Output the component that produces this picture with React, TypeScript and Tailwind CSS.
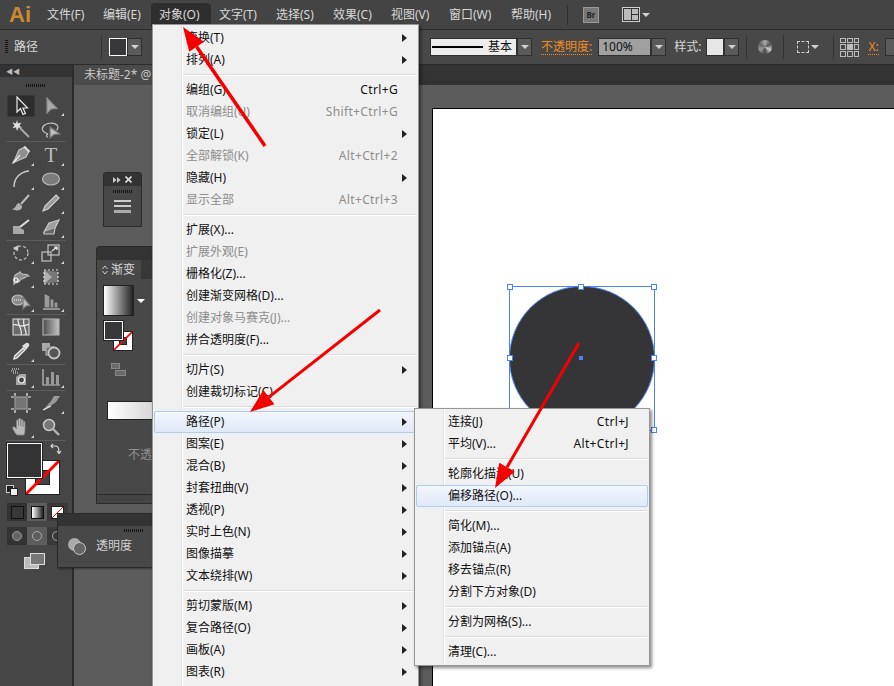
import React from "react";

const FONT = "font-['Noto_Sans','Noto_Sans_CJK_SC',sans-serif]";

type Item = { l: string; s?: string; d?: boolean; sub?: boolean; hi?: boolean } | "sep";

const mainMenu: Item[] = [
  { l: "变换(T)", sub: true },
  { l: "排列(A)", sub: true },
  "sep",
  { l: "编组(G)", s: "Ctrl+G" },
  { l: "取消编组(U)", s: "Shift+Ctrl+G", d: true },
  { l: "锁定(L)", sub: true },
  { l: "全部解锁(K)", s: "Alt+Ctrl+2", d: true },
  { l: "隐藏(H)", sub: true },
  { l: "显示全部", s: "Alt+Ctrl+3", d: true },
  "sep",
  { l: "扩展(X)..." },
  { l: "扩展外观(E)", d: true },
  { l: "栅格化(Z)..." },
  { l: "创建渐变网格(D)..." },
  { l: "创建对象马赛克(J)...", d: true },
  { l: "拼合透明度(F)..." },
  "sep",
  { l: "切片(S)", sub: true },
  { l: "创建裁切标记(C)" },
  "sep",
  { l: "路径(P)", sub: true, hi: true },
  { l: "图案(E)", sub: true },
  { l: "混合(B)", sub: true },
  { l: "封套扭曲(V)", sub: true },
  { l: "透视(P)", sub: true },
  { l: "实时上色(N)", sub: true },
  { l: "图像描摹", sub: true },
  { l: "文本绕排(W)", sub: true },
  "sep",
  { l: "剪切蒙版(M)", sub: true },
  { l: "复合路径(O)", sub: true },
  { l: "画板(A)", sub: true },
  { l: "图表(R)", sub: true },
];

const pathMenu: Item[] = [
  { l: "连接(J)", s: "Ctrl+J" },
  { l: "平均(V)...", s: "Alt+Ctrl+J" },
  "sep",
  { l: "轮廓化描边(U)" },
  { l: "偏移路径(O)...", hi: true },
  "sep",
  { l: "简化(M)..." },
  { l: "添加锚点(A)" },
  { l: "移去锚点(R)" },
  { l: "分割下方对象(D)" },
  "sep",
  { l: "分割为网格(S)..." },
  "sep",
  { l: "清理(C)..." },
];

const topMenu = [
  { l: "文件(F)", w: "w-[56px]" },
  { l: "编辑(E)", w: "w-[56px]" },
  { l: "对象(O)", w: "w-[60px] bg-[#2e2e2e] rounded-t-sm" },
  { l: "文字(T)", w: "w-[57px]" },
  { l: "选择(S)", w: "w-[57px]" },
  { l: "效果(C)", w: "w-[58px]" },
  { l: "视图(V)", w: "w-[58px]" },
  { l: "窗口(W)", w: "w-[62px]" },
  { l: "帮助(H)", w: "w-[64px]" },
];

function Caret({ c = "border-t-[#d0d0d0]" }: { c?: string }) {
  return <span className={`block w-0 h-0 border-x-[4px] border-x-transparent border-t-[4px] ${c}`} />;
}

function DropBtn({ w = "w-[15px]" }: { w?: string }) {
  return (
    <span className={`${w} h-[18px] flex items-center justify-center bg-[#5a5a5a] border border-[#2f2f2f]`}>
      <Caret />
    </span>
  );
}

function Grip({ w = "w-[20px]" }: { w?: string }) {
  return <div className={`${w} h-[3px] bg-[repeating-linear-gradient(90deg,#151515_0,#151515_1px,transparent_1px,transparent_2px)]`} />;
}

function Menu({ items, box, sepMl }: { items: Item[]; box: string; sepMl: string }) {
  return (
    <div className={`absolute bg-[#f0f0f0] border border-[#979797] pt-[2px] shadow-[2px_2px_3px_rgba(0,0,0,0.45)] text-[12px] ${box}`}>
      <div className="absolute top-px bottom-px left-[28px] w-px bg-[#e2e3e3]" />
      <div className="absolute top-px bottom-px left-[29px] w-px bg-white" />
      {items.map((it, i) =>
        it === "sep" ? (
          <div key={i} className={`h-[8px] flex flex-col justify-center ${sepMl} mr-[2px]`}>
            <div className="h-px bg-[#dcdcdc]" />
            <div className="h-px bg-white" />
          </div>
        ) : (
          <div
            key={i}
            className={`h-[22px] mx-px flex items-center pl-[31px] relative whitespace-nowrap border rounded-[2px] ${it.d ? "text-[#8d8d8d]" : "text-[#111]"} ${
              it.hi ? "border-[#aeccf0] bg-[linear-gradient(#f3f7fd,#dfe9f8)]" : "border-transparent"
            }`}
          >
            <span>{it.l}</span>
            {it.s && <span className="ml-auto mr-[18px] tracking-[0.35px]">{it.s}</span>}
            {it.sub && <span className="ml-auto mr-[9px] w-0 h-0 border-y-[4px] border-y-transparent border-l-[5px] border-l-[#222]" />}
          </div>
        )
      )}
    </div>
  );
}

const S = "#c4c4c4";

function Ic({ children }: { children: React.ReactNode }) {
  return (
    <svg viewBox="0 0 20 20" className="w-[20px] h-[20px]" fill="none" stroke={S} strokeWidth="1.2">
      {children}
    </svg>
  );
}

const icons: Record<string, React.ReactNode> = {
  sel: <Ic><path d="M6 1V16L9.5 12.5L12 18.5L14.5 17.5L12 12H16.5Z" fill="#2c2c2c" stroke="#e8e8e8" /></Ic>,
  direct: <Ic><path d="M6 2V17L10 13L16 12.5Z" fill="#a8a8a8" stroke="#8c8c8c" /></Ic>,
  wand: <Ic><path d="M6 1L7 4.5L10.5 3.5L8.5 6.5L11 9L7.5 8.5L6 12L5 8.5L1.5 9L3.5 6.5L1.5 3.5L5 4.5Z" fill="#e0e0e0" stroke="none" /><path d="M9 9L18 18" strokeWidth="2" stroke="#aaa" /></Ic>,
  lasso: <Ic><path d="M7 15C2 14 0 10 2.5 7C5 4 13 3 16 6C17.5 8 17 10 15.5 11" /><path d="M9 8V19L13 15.5L19 15Z" fill="#bdbdbd" stroke="#777" /><path d="M7 15C5 16 5 18 7 18" /></Ic>,
  pen: <Ic><path d="M14 2L18 6L15 12L6 16L2 18L4 14L8 5Z" fill="#8f8f8f" /><path d="M2 18L9 10" stroke="#eee" /><path d="M13 1.5L18.5 7" strokeWidth="2" stroke="#ddd" /></Ic>,
  arc: <Ic><path d="M3 18C3 9 9 3 18 2" strokeWidth="1.4" stroke="#ccc" /></Ic>,
  ell: <Ic><ellipse cx="10" cy="10" rx="8.5" ry="6" fill="#7c7c7c" stroke="#b8b8b8" /></Ic>,
  brush: <Ic><path d="M18 2L10 11" strokeWidth="2" stroke="#bbb" /><path d="M8 10C4 11 6 15 1 16C6 19 12 17 11 13Z" fill="#b0b0b0" stroke="none" /></Ic>,
  pencil: <Ic><path d="M15 2L18 5L7 16L2 18L4 13Z" fill="#9a9a9a" stroke="#cfcfcf" /></Ic>,
  blob: <Ic><path d="M2 9H11L9 11L13 13V17H2Z" fill="#a8a8a8" stroke="none" /><path d="M9 10L18 3" strokeWidth="2" stroke="#ddd" /></Ic>,
  eraser: <Ic><path d="M8 6L18 3L14 11L3 15Z" fill="#a0a0a0" stroke="#c8c8c8" /><path d="M3 15V17H13L14 11" fill="#666" /></Ic>,
  rotate: <Ic><circle cx="10" cy="10" r="7" strokeDasharray="3 2" /><path d="M3 5L7 3L6.5 7.5Z" fill="#ddd" /></Ic>,
  scale: <Ic><rect x="1" y="9" width="9" height="9" /><rect x="7" y="2" width="11" height="10" /><path d="M11 8L16 4M13 4H16V7" stroke="#eee" /></Ic>,
  warp: <Ic><path d="M3 12C3 6 8 7 9 5C11 10 15 5 18 9C15 9 13 12 10 12C8 17 6 14 3 17Z" fill="#8a8a8a" stroke="#bbb" /><circle cx="5" cy="13" r="2" stroke="#fff" /></Ic>,
  free: <Ic><path d="M3 3L17 5V15L3 17Z" fill="#777" stroke="none" /><path d="M3 3L11 10L3 17Z" fill="#b0b0b0" stroke="none" /><rect x="3" y="3" width="14" height="14" strokeDasharray="2 2" stroke="#ddd" /></Ic>,
  shape: <Ic><ellipse cx="7" cy="9" rx="6" ry="5" fill="#8a8a8a" /><path d="M3 9H11" strokeDasharray="1 1" stroke="#fff" /><path d="M12 6V18L15 15L19 14.5Z" fill="#bdbdbd" stroke="#777" /></Ic>,
  graph: <Ic><path d="M3 2L9 5V17H3Z M9 8H13V17H9Z M13 11H17V17H13Z" fill="#9a9a9a" stroke="#444" /><path d="M2 18H19" /></Ic>,
  mesh: <Ic><rect x="2" y="2" width="16" height="16" fill="#6a6a6a" stroke="#ccc" /><path d="M2 8C7 6 9 12 18 7M7 2C6 8 12 12 10 18M13 2C11 9 16 13 15 18" stroke="#eee" /></Ic>,
  grad: <Ic><defs><linearGradient id="tg"><stop offset="0" stopColor="#4c4c4c" /><stop offset="1" stopColor="#c4c4c4" /></linearGradient></defs><rect x="2" y="2" width="16" height="16" fill="url(#tg)" stroke="#aaa" /></Ic>,
  drop: <Ic><path d="M12 7L14 9L6 17L3 18L3.5 15Z" fill="#999" stroke="#eee" /><path d="M11 5L15 9L18 5C19 3 17 1 15 2Z" fill="#ddd" stroke="none" /></Ic>,
  blend: <Ic><rect x="1" y="2" width="8" height="8" fill="#aaa" stroke="none" /><rect x="5" y="6" width="8" height="8" fill="#777" stroke="#aaa" /><circle cx="13" cy="12" r="5.5" fill="#555" strokeWidth="1.8" /></Ic>,
  spray: <Ic><path d="M9 7H15V18H5V10Z" fill="#a6a6a6" stroke="none" /><circle cx="10.5" cy="13" r="3" fill="#444" stroke="#eee" /><path d="M1 2H8M0 4H6M2 6H8" strokeDasharray="1 1" stroke="#eee" /></Ic>,
  bars: <Ic><path d="M2 2V18H19" /><rect x="5" y="10" width="3" height="8" fill="#999" stroke="none" /><rect x="10" y="5" width="3" height="13" fill="#999" stroke="none" /><rect x="15" y="8" width="3" height="10" fill="#999" stroke="none" /></Ic>,
  board: <Ic><rect x="4" y="4" width="12" height="12" fill="#757575" stroke="#999" /><path d="M4 0V3M16 0V3M4 17V20M16 17V20M0 4H3M0 16H3M17 4H20M17 16H20" stroke="#eee" /></Ic>,
  slice: <Ic><path d="M2 17L10 8L13 3H19L15 9L8 14Z" fill="#999" stroke="none" /><path d="M2 17L10 13" stroke="#eee" /></Ic>,
  hand: <Ic><path d="M5 17C3 14 1 11 2 10C3 9 5 11 5.5 12V4C5.5 2.5 7.5 2.5 7.5 4V9V2.5C7.5 1 9.8 1 9.8 2.5V9V3.5C9.8 2 12 2 12 3.5V10V5.5C12 4 14 4 14 5.5V12C14 15 13.5 16 13 18H6Z" fill="#b8b8b8" stroke="#888" strokeWidth="0.8" /></Ic>,
  zoom: <Ic><circle cx="8" cy="8" r="5.5" fill="#777" stroke="#c8c8c8" strokeWidth="1.5" /><path d="M12 12L18 18" strokeWidth="2.4" stroke="#b4b4b4" /></Ic>,
};

type Tool = { i: string; c?: boolean; t?: boolean };

function ToolCell({ i, c, t, active }: Tool & { active?: boolean }) {
  return (
    <div className="relative w-[30px] flex items-center justify-center">
      {active && <div className="absolute w-[28px] h-[22px] bg-[#2d2d2d] border border-[#3a3a3a]" />}
      <div className="relative">
        {t ? (
          <span className="block w-[20px] text-center text-[21px] leading-[20px] text-[#bcbcbc] font-['Liberation_Serif',serif]">T</span>
        ) : (
          icons[i]
        )}
      </div>
      {c && <span className="absolute right-[2px] bottom-[1px] w-0 h-0 border-l-[3px] border-l-transparent border-b-[3px] border-b-[#d5d5d5]" />}
    </div>
  );
}

function ToolRow({ a, b, h = "h-[24px]", active }: { a: Tool; b: Tool; h?: string; active?: boolean }) {
  return (
    <div className={`flex pl-[6px] ${h}`}>
      <ToolCell {...a} active={active} />
      <ToolCell {...b} />
    </div>
  );
}

function ToolSep({ h = "h-[2px]" }: { h?: string }) {
  return (
    <div className={`${h} flex items-center px-[6px]`}>
      <div className="w-full h-px bg-[#5c5c5c]" />
    </div>
  );
}

function NoneSwatch({ box, inner }: { box: string; inner: string }) {
  return (
    <div className={`relative bg-white border border-[#222] overflow-hidden ${box}`}>
      <div className={`absolute bg-[#444] border border-[#222] ${inner}`} />
      <svg viewBox="0 0 10 10" preserveAspectRatio="none" className="absolute inset-0 w-full h-full">
        <path d="M0 10L10 0" stroke="#f00" strokeWidth="0.9" />
      </svg>
    </div>
  );
}

function Arrow({ x1, y1, x2, y2, len, hw, sw }: { x1: number; y1: number; x2: number; y2: number; len: number; hw: number; sw: number }) {
  const d = Math.hypot(x2 - x1, y2 - y1);
  const ux = (x2 - x1) / d;
  const uy = (y2 - y1) / d;
  const bx = x2 - ux * len;
  const by = y2 - uy * len;
  const pts = `${x2},${y2} ${bx - uy * hw},${by + ux * hw} ${bx + uy * hw},${by - ux * hw}`;
  return (
    <g>
      <line x1={x1} y1={y1} x2={bx} y2={by} stroke="#f40000" strokeWidth={sw} />
      <polygon points={pts} fill="#f40000" />
    </g>
  );
}

function Handle({ cls }: { cls: string }) {
  return <span className={`absolute w-[6px] h-[6px] bg-white border border-[#4d84f5] ${cls}`} />;
}

export default function App() {
  return (
    <div className={`relative w-[894px] h-[686px] overflow-hidden flex flex-col bg-[#5c5c5c] text-[12px] ${FONT}`}>
      {/* menu bar */}
      <div className="h-[30px] shrink-0 flex items-center bg-[#444444] border-b border-[#2c2c2c] text-[#d8d8d8]">
        <span className="w-[39px] pl-[9px] text-[22px] leading-[24px] font-bold text-[#c98c30] font-['Liberation_Sans',sans-serif]">Ai</span>
        {topMenu.map((m) => (
          <span key={m.l} className={`h-[24px] leading-[24px] pl-2 whitespace-nowrap ${m.w}`}>{m.l}</span>
        ))}
        <span className="w-px h-[20px] bg-[#2f2f2f]" />
        <span className="ml-[15px] w-[16px] h-[16px] flex items-center justify-center bg-[#777] border border-[#999] text-[8px] font-bold text-[#222]">Br</span>
        <span className="ml-[23px] w-[18px] h-[15px] border border-[#cfcfcf] bg-[#333] grid grid-cols-2 grid-rows-2 gap-px p-px">
          <span className="row-span-2 bg-[#bbb]" />
          <span className="bg-[#bbb]" />
          <span className="bg-[#bbb]" />
        </span>
        <span className="ml-[2px]"><Caret /></span>
      </div>

      {/* options bar */}
      <div className="h-[35px] shrink-0 flex items-center overflow-hidden whitespace-nowrap bg-[#484848] border-b border-[#2b2b2b] text-[#d8d8d8] [&>*]:shrink-0">
        <span className="ml-[5px] w-[3px] h-[14px] bg-[repeating-linear-gradient(#151515_0,#151515_1px,transparent_1px,transparent_2px)]" />
        <span className="ml-[6px] text-[12px]">路径</span>
        <span className="ml-[63px] w-px h-[24px] bg-[#333]" />
        <span className="ml-[7px] w-[18px] h-[18px] bg-[#38383b] border border-white" />
        <DropBtn />
        <span className="ml-[288px] w-[87px] h-[18px] flex items-center bg-[#ececec] border border-[#2f2f2f] text-[#111]">
          <span className="ml-px w-[51px] h-[2px] bg-black" />
          <span className="ml-[5px]">基本</span>
        </span>
        <DropBtn />
        <span className="ml-[9px] text-[#f08a24] border-b border-dotted border-[#f08a24] leading-[15px]">不透明度:</span>
        <span className="ml-[6px] w-[53px] h-[18px] flex items-center pl-[3px] bg-[#a0a0a0] border border-[#2f2f2f] text-[#111]">100%</span>
        <DropBtn />
        <span className="ml-[8px]">样式:</span>
        <span className="ml-[5px] w-[18px] h-[18px] bg-[#e6e6e6] border border-[#2f2f2f]" />
        <DropBtn />
        <span className="ml-[7px] w-px h-[24px] bg-[#333]" />
        <span className="ml-[11px] w-[14px] h-[14px] rounded-full bg-[conic-gradient(#aaa,#555,#ccc,#444,#999,#666,#aaa)]" />
        <span className="ml-[11px] w-px h-[24px] bg-[#333]" />
        <span className="ml-[13px] w-[12px] h-[12px] border border-dashed border-[#ccc]" />
        <span className="ml-[2px]"><Caret /></span>
        <span className="ml-[14px] w-px h-[24px] bg-[#333]" />
        <span className="ml-[6px] w-[19px] h-[19px] grid grid-cols-3 gap-[1px]">
          {[0, 1, 2, 3, 4, 5, 6, 7, 8].map((n) => (
            <span key={n} className={`border border-[#bbb] ${n === 4 ? "bg-[#bbb]" : ""}`} />
          ))}
        </span>
        <span className="ml-[9px] text-[#f08a24] border-b border-dotted border-[#f08a24] leading-[15px]">X:</span>
        <span className="ml-[6px] w-[10px] h-[18px] bg-[#5a5a5a] border border-[#2f2f2f]" />
      </div>

      {/* work area */}
      <div className="flex-1 flex min-h-0">
        <div className="w-[72px] shrink-0 bg-[#464646] flex flex-col">
          <div className="h-[12px] bg-[#333] flex items-center pl-[6px] text-[7px] leading-none text-[#bbb]">◀◀</div>
          <div className="h-[17px] flex items-center justify-center"><Grip /></div>
          <ToolRow h="h-[23px]" active a={{ i: "sel" }} b={{ i: "direct", c: true }} />
          <ToolRow h="h-[23px]" a={{ i: "wand" }} b={{ i: "lasso" }} />
          <ToolSep h="h-[3px]" />
          <ToolRow a={{ i: "pen", c: true }} b={{ i: "t", t: true, c: true }} />
          <ToolRow a={{ i: "arc", c: true }} b={{ i: "ell", c: true }} />
          <ToolRow a={{ i: "brush" }} b={{ i: "pencil", c: true }} />
          <ToolRow a={{ i: "blob" }} b={{ i: "eraser", c: true }} />
          <ToolSep />
          <ToolRow a={{ i: "rotate", c: true }} b={{ i: "scale", c: true }} />
          <ToolRow a={{ i: "warp", c: true }} b={{ i: "free" }} />
          <ToolRow a={{ i: "shape", c: true }} b={{ i: "graph", c: true }} />
          <ToolSep />
          <ToolRow a={{ i: "mesh" }} b={{ i: "grad" }} />
          <ToolRow a={{ i: "drop", c: true }} b={{ i: "blend" }} />
          <ToolSep />
          <ToolRow a={{ i: "spray", c: true }} b={{ i: "bars", c: true }} />
          <ToolSep />
          <ToolRow a={{ i: "board" }} b={{ i: "slice", c: true }} />
          <ToolRow a={{ i: "hand", c: true }} b={{ i: "zoom" }} />
          <ToolSep />
          {/* fill and stroke */}
          <div className="relative h-[60px] shrink-0">
            <NoneSwatch box="absolute left-[25px] top-[19px] w-[35px] h-[35px]" inner="left-[9px] top-[9px] w-[15px] h-[15px]" />
            <div className="absolute left-[7px] top-[2px] w-[35px] h-[35px] bg-[#333336] border border-white outline outline-[#222]" />
            <svg viewBox="0 0 12 12" className="absolute left-[50px] top-[2px] w-[12px] h-[12px]" fill="none" stroke="#ddd" strokeWidth="1.2">
              <path d="M1 3H6C8.5 3 9 5 9 10" />
              <path d="M3 1L1 3L3 5M7 8L9 10.5L11 8" />
            </svg>
            <span className="absolute left-[6px] top-[44px] w-[8px] h-[8px] bg-[#222] border border-[#ccc]" />
            <span className="absolute left-[10px] top-[47px] w-[8px] h-[8px] bg-[#eee] border border-[#222]" />
          </div>
          <div className="mt-[2px] ml-[7px] w-[61px] h-[18px] flex bg-[#3a3a3a]">
            <span className="w-[20px] flex items-center justify-center bg-[#333]"><span className="w-[13px] h-[13px] bg-[#38383b] border border-[#111]" /></span>
            <span className="w-[20px] flex items-center justify-center bg-[#5d5d5d]"><span className="w-[13px] h-[13px] border border-[#111] bg-[linear-gradient(90deg,#fff,#222)]" /></span>
            <span className="w-[20px] flex items-center justify-center"><NoneSwatch box="w-[13px] h-[13px]" inner="hidden" /></span>
          </div>
          <div className="mt-[6px] ml-[7px] w-[61px] h-[18px] flex bg-[#3a3a3a]">
            <span className="w-[20px] flex items-center justify-center bg-[#333]"><span className="w-[10px] h-[10px] rounded-full border border-[#999] bg-[#666]" /></span>
            <span className="w-[20px] flex items-center justify-center bg-[#5d5d5d]"><span className="w-[10px] h-[10px] rounded-full border border-[#aaa]" /></span>
            <span className="w-[20px] flex items-center justify-center"><span className="w-[10px] h-[10px] rounded-full border border-[#aaa]" /></span>
          </div>
          <div className="mt-[8px] ml-[24px] relative w-[21px] h-[16px]">
            <span className="absolute left-0 top-[4px] w-[15px] h-[12px] bg-[#bbb] border border-[#ddd]" />
            <span className="absolute left-[6px] top-0 w-[15px] h-[12px] bg-[#777] border border-[#ddd]" />
          </div>
        </div>
        <div className="w-[2px] shrink-0 bg-[#2b2b2b]" />

        <div className="flex-1 flex flex-col min-w-0">
          <div className="h-[20px] shrink-0 bg-[#333333] flex items-stretch">
            <span className="w-[120px] bg-[#4a4a4a] pl-[10px] leading-[20px] whitespace-nowrap text-[#c8c8c8]">未标题-2* @ 100%</span>
          </div>
          <div className="flex-1 bg-[#5c5c5c] pt-[23px] pl-[358px]">
            <div className="relative w-full h-full bg-white border-l border-t border-black">
              <div className="absolute left-[76px] top-[177px] w-[146px] h-[145px] border border-[#4d84f5]">
                <div className="absolute -left-px -top-px w-[146px] h-[145px] rounded-full bg-[#353538] border border-[#4d84f5]" />
                <Handle cls="-left-[3px] -top-[3px]" />
                <Handle cls="left-[68px] -top-[3px]" />
                <Handle cls="-right-[3px] -top-[3px]" />
                <Handle cls="-left-[3px] top-[68px]" />
                <Handle cls="-right-[3px] top-[68px]" />
                <Handle cls="-left-[3px] -bottom-[3px]" />
                <Handle cls="-right-[3px] -bottom-[3px]" />
                <span className="absolute left-[69px] top-[69px] w-[4px] h-[4px] bg-[#4d84f5]" />
              </div>
            </div>
          </div>
        </div>
      </div>

      {/* floating collapsed panel */}
      <div className="absolute left-[103px] top-[172px] w-[39px] h-[55px] bg-[#484848] border border-[#2a2a2a] rounded-t-[3px] flex flex-col items-center">
        <div className="w-full h-[13px] bg-[#333] flex items-center justify-between px-[9px]">
          <svg viewBox="0 0 8 6" className="w-[8px] h-[6px]" fill="#ccc"><path d="M0 0L3.5 3L0 6ZM4 0L7.5 3L4 6Z" /></svg>
          <svg viewBox="0 0 7 7" className="w-[7px] h-[7px]" stroke="#ddd" strokeWidth="1.6"><path d="M0.5 0.5L6.5 6.5M6.5 0.5L0.5 6.5" /></svg>
        </div>
        <div className="mt-[4px]"><Grip /></div>
        <div className="mt-[7px] w-[17px] flex flex-col gap-[3px]">
          <span className="h-[2px] bg-[#ccc]" />
          <span className="h-[2px] bg-[#ccc]" />
          <span className="h-[3px] bg-[#aaa]" />
        </div>
      </div>

      {/* gradient panel */}
      <div className="absolute left-[96px] top-[246px] w-[70px] h-[258px] bg-[#484848] border border-[#2a2a2a] rounded-t-[3px] flex flex-col">
        <div className="h-[13px] shrink-0 bg-[#333]" />
        <div className="h-[19px] shrink-0 flex bg-[#383838]">
          <span className="w-[44px] flex items-center gap-[3px] pl-[5px] bg-[#484848] text-[#d8d8d8]">
            <svg viewBox="0 0 6 10" className="w-[6px] h-[10px]" fill="none" stroke="#ccc"><path d="M0.5 4L3 1L5.5 4M0.5 6L3 9L5.5 6" /></svg>
            渐变
          </span>
        </div>
        <div className="flex items-center ml-[6px] mt-[6px]">
          <span className="w-[31px] h-[31px] border border-[#222] bg-[linear-gradient(90deg,#fff,#222)]" />
          <span className="ml-[3px]"><Caret c="border-t-white" /></span>
        </div>
        <div className="relative ml-[7px] mt-[5px] w-[30px] h-[31px]">
          <NoneSwatch box="absolute left-[9px] top-[10px] w-[20px] h-[20px]" inner="left-[5px] top-[5px] w-[8px] h-[8px]" />
          <span className="absolute left-0 top-0 w-[19px] h-[19px] bg-[#38383b] border border-white outline outline-[#222]" />
        </div>
        <div className="ml-[14px] mt-[11px] w-[16px] flex flex-col gap-px">
          <span className="w-[9px] h-[6px] bg-[#6a6a6a] border border-[#888]" />
          <span className="ml-[4px] w-[11px] h-[6px] bg-[#6a6a6a] border border-[#888]" />
        </div>
        <div className="mt-[25px] ml-[10px] h-[19px] border border-[#222] bg-[linear-gradient(90deg,#fff,#ccc)]" />
        <span className="mt-[26px] ml-[31px] text-[#8f8f8f] whitespace-nowrap">不透明度</span>
        <div className="mt-auto h-[9px] border-t border-[#2a2a2a] bg-[#444]" />
      </div>

      {/* transparency panel */}
      <div className="absolute left-[57px] top-[513px] w-[100px] h-[55px] bg-[#484848] border border-[#2a2a2a] shadow-[1px_1px_2px_rgba(0,0,0,0.4)] flex flex-col">
        <div className="h-[12px] bg-[#333]" />
        <div className="h-[4px] mt-[3px] ml-[66px]"><Grip /></div>
        <div className="flex items-center pl-[10px] mt-[4px]">
          <span className="relative w-[18px] h-[17px]">
            <span className="absolute left-0 top-0 w-[13px] h-[13px] rounded-full bg-[#aaa]" />
            <span className="absolute left-[5px] top-[4px] w-[13px] h-[13px] rounded-full border border-[#ccc] bg-[#666]" />
          </span>
          <span className="ml-[10px] text-[#d0d0d0]">透明度</span>
        </div>
      </div>

      <Menu items={mainMenu} box="left-[152px] top-[24px] w-[267px] h-[664px]" sepMl="ml-[30px]" />
      <Menu items={pathMenu} box="left-[414px] top-[408px] w-[236px] h-[258px]" sepMl="ml-[30px]" />

      <svg className="absolute inset-0 w-[894px] h-[686px] pointer-events-none" viewBox="0 0 894 686">
        <Arrow x1={265} y1={146} x2={183} y2={27} len={24} hw={9} sw={3.5} />
        <Arrow x1={380} y1={310} x2={250} y2={412} len={24} hw={9} sw={3} />
        <Arrow x1={579} y1={343} x2={495} y2={488} len={24} hw={9} sw={3} />
      </svg>
    </div>
  );
}
